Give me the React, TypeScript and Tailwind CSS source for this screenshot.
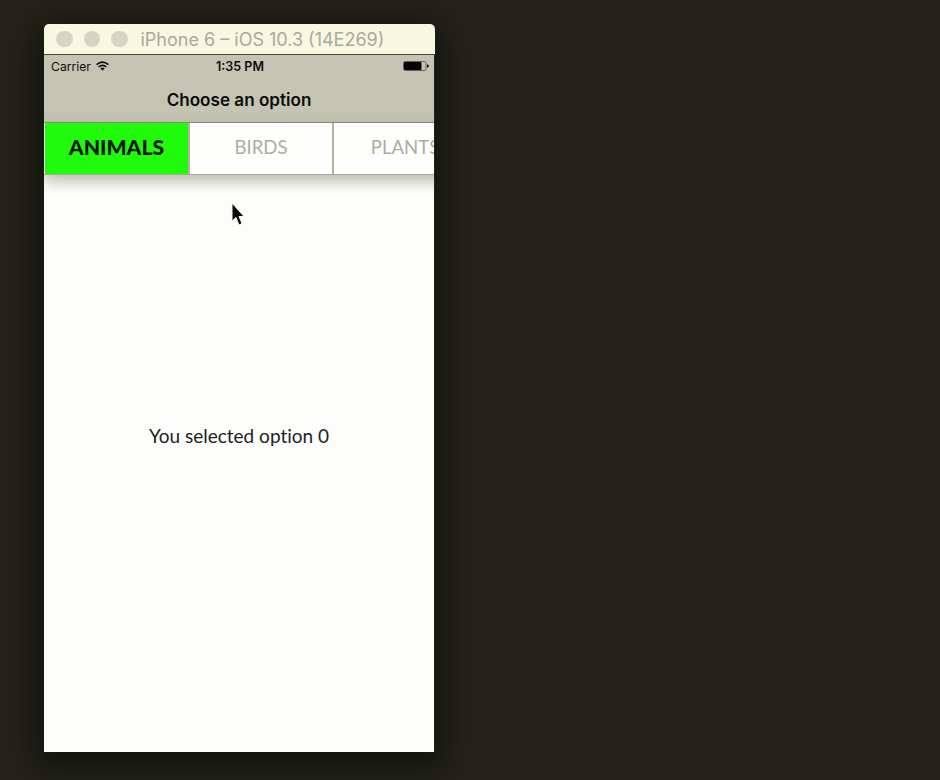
const tabs = ["ANIMALS", "BIRDS", "PLANTS"];

function Wifi() {
  return (
    <svg className="ml-[5px] h-[10px] w-[13px]" viewBox="0 0 13 10" fill="none" stroke="#0c0c0c" strokeWidth="1.6">
      <path d="M.6 3.6Q6.5-1.4 12.4 3.6" />
      <path d="M2.7 5.9Q6.5 2.7 10.3 5.9" />
      <path d="M4.3 7.2Q6.5 5.6 8.7 7.2L6.5 9.7Z" fill="#0c0c0c" stroke="none" />
    </svg>
  );
}

function Battery() {
  return (
    <svg className="h-[10px] w-[26px]" viewBox="0 0 26 10">
      <rect x=".5" y=".5" width="22.5" height="9" rx="1.8" fill="none" stroke="#62625c" />
      <rect x="1" y="1" width="17.5" height="8" rx="1" fill="#050505" />
      <path d="M24 3.3Q26 4 26 5T24 6.7Z" fill="#151515" />
    </svg>
  );
}

export default function App() {
  return (
    <main className="relative h-[780px] w-[940px] overflow-hidden bg-[#23231b] pl-[44px] pt-[24px] font-['Inter',sans-serif]">
      <section className="flex h-[728px] w-[391px] flex-col rounded-t-[5px] shadow-[0_8px_32px_8px_rgba(0,0,0,0.45)]">
        <header className="flex h-[31px] shrink-0 items-center rounded-t-[5px] border-b border-[#4a4a28] bg-[#f8f7e2] pl-[12px]">
          <div className="flex gap-[11px]">
            <i className="size-[16.5px] rounded-full bg-[#d6d5c4]" />
            <i className="size-[16.5px] rounded-full bg-[#d6d5c4]" />
            <i className="size-[16.5px] rounded-full bg-[#d6d5c4]" />
          </div>
          <h1 className="ml-[13px] whitespace-nowrap pt-[2px] text-[18px] leading-[30px] text-[#a9a99c]">iPhone 6 – iOS 10.3 (14E269)</h1>
        </header>
        <div className="flex min-h-0 w-[390px] flex-1 flex-col overflow-hidden bg-[#fdfdfb]">
          <div className="h-[68px] shrink-0 border-b border-[#8f8f83] bg-[#c5c4b3] text-[#0c0c0c]">
            <div className="grid h-[23px] grid-cols-[1fr_auto_1fr] items-center pl-[7px] pr-[5px] text-[12.5px]">
              <div className="flex items-center text-[12.2px]"><span className="pt-px">Carrier</span><Wifi /></div>
              <span className="pt-[2px] font-semibold">1:35 PM</span>
              <div className="flex justify-end pb-px"><Battery /></div>
            </div>
            <h2 className="pt-[8px] text-center text-[17.1px] font-semibold leading-[28px]">Choose an option</h2>
          </div>
          <nav className="relative flex h-[52px] w-[434px] shrink-0 border-b border-[#a9a99c] bg-[#fdfdfb] pl-px font-['Lato',sans-serif] shadow-[0_6px_14px_rgba(60,60,20,0.35)]">
            {tabs.map((tab, i) => (
              <button
                key={tab}
                className={
                  i === 0
                    ? "flex h-[51px] w-[145px] items-center justify-center border-r-2 border-[#b3b3a0] bg-[#1ffb0a] pb-px text-[21.2px] font-black text-[#041504]"
                    : "flex h-[51px] w-[144px] items-center justify-center border-r-2 border-[#b3b3a0] pb-[2px] text-[18.6px] text-[#adada2]"
                }
              >
                {tab}
              </button>
            ))}
          </nav>
          <p className="pt-[247px] text-center font-['Lato',sans-serif] text-[19px] leading-[28px] text-[#222222] [font-variant-ligatures:none]">You selected option 0</p>
        </div>
      </section>
      <svg className="absolute left-[230px] top-[201px] h-[27px] w-[17px]" viewBox="0 0 17 27">
        <path d="M2 2V20L6 16.5L9 24L12 22.5L9 15.5H14Z" fill="#050505" stroke="#f6f6ee" strokeWidth="1" />
      </svg>
    </main>
  );
}
